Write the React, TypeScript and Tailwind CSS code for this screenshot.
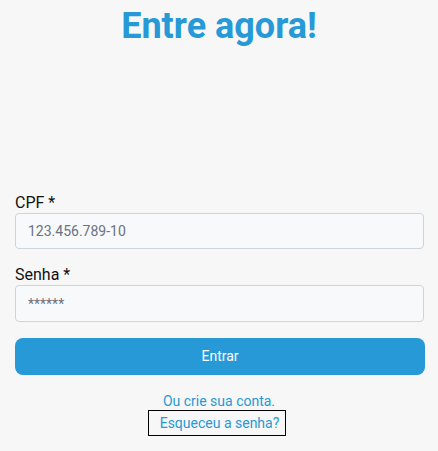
export default function App() {
  return (
    <div className="min-h-[451px] w-full bg-[#f7f7f7] px-[15px] font-['Roboto',sans-serif]">
      <h1 className="pt-[4px] text-center text-[36px] font-bold leading-[44px] text-[#2699d6]">Entre agora!</h1>
      <form className="mt-[145px] flex flex-col">
        <label className="text-[16px] leading-[20px] text-[#111]">CPF *</label>
        <input
          className="h-[36px] w-[409px] rounded-[4px] border border-[#cfd4dc] bg-[#f8f9fb] px-[12px] text-[14px] placeholder:text-[#6b7280] outline-none"
          placeholder="123.456.789-10"
        />
        <label className="mt-[16px] text-[16px] leading-[20px] text-[#111]">Senha *</label>
        <input
          type="password"
          className="h-[37px] w-[409px] rounded-[4px] border border-[#cfd4dc] bg-[#f8f9fb] px-[12px] text-[14px] placeholder:text-[#6b7280] outline-none"
          placeholder="******"
        />
        <button
          type="button"
          className="mt-[16px] h-[37px] w-[410px] rounded-[8px] bg-[#2699d6] text-[14px] font-normal text-white"
        >
          Entrar
        </button>
      </form>
      <div className="mt-[17px] flex flex-col items-center text-[14px] leading-[18px] text-[#2699d6]">
        <span>Ou crie sua conta.</span>
        <span className="mr-[4px] border border-black py-[3px] pl-[11px] pr-[6px] leading-[18px]">Esqueceu a senha?</span>
      </div>
    </div>
  );
}
